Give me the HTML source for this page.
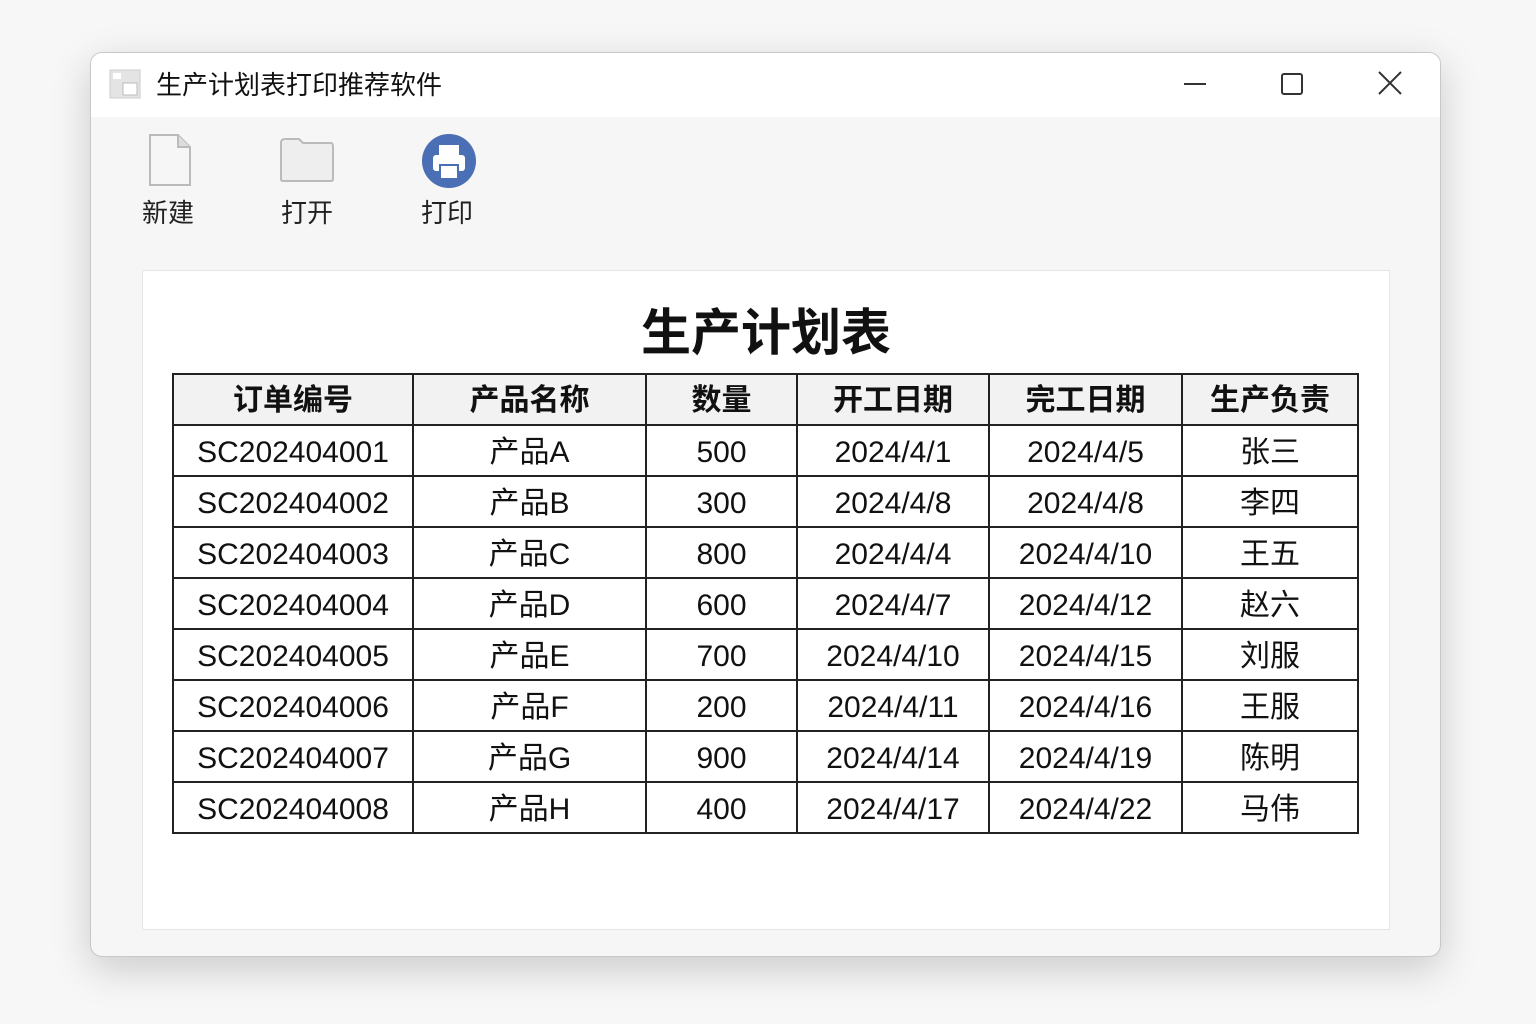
<!DOCTYPE html><html><head><meta charset="utf-8"><style>
body{margin:0;width:1536px;height:1024px;background:#f7f7f7;font-family:"Liberation Sans","Noto Sans CJK SC",sans-serif;position:relative;overflow:hidden}
.win{position:absolute;left:90px;top:52px;width:1349px;height:903px;border:1px solid #c8c8c8;border-radius:12px;background:#f6f6f6;box-shadow:0 12px 40px rgba(0,0,0,.18);overflow:hidden}
.title{position:absolute;left:0;top:0;width:100%;height:64px;background:#fff}
.title span{position:absolute;left:65px;top:12px;font-size:26px;color:#111}
.tb{position:absolute;font-size:26px;color:#222;top:140px}
.panel{position:absolute;left:51px;top:217px;width:1246px;height:658px;background:#fff;border:1px solid #e6e6e6}
h1{position:absolute;left:0;width:100%;top:22px;margin:0;text-align:center;font-size:50px;font-weight:bold;color:#111}
table{position:absolute;left:29px;top:102px;border-collapse:collapse;font-size:30px;color:#111}
td,th{border:2px solid #222;height:51px;padding:0;text-align:center;line-height:30px;padding-top:4px;box-sizing:border-box}
th{background:#f2f2f2;font-weight:bold;padding-top:2px}
</style></head><body>
<div class="win">
<div class="title">
<svg style="position:absolute;left:18px;top:16px" width="32" height="30"><rect x="1" y="1" width="30" height="28" fill="#e4e4e4" stroke="#ccc"/><rect x="4" y="4" width="8" height="6" fill="#fff"/><rect x="14" y="14" width="14" height="12" fill="#fff" stroke="#bbb"/></svg>
<span>生产计划表打印推荐软件</span>
<div style="position:absolute;left:1093px;top:30px;width:22px;height:2px;background:#333"></div>
<div style="position:absolute;left:1190px;top:20px;width:18px;height:18px;border:2px solid #333;border-radius:3px"></div>
<svg style="position:absolute;left:1287px;top:18px" width="24" height="24"><path d="M1 1L23 23M23 1L1 23" stroke="#333" stroke-width="2"/></svg>
</div>
<svg style="position:absolute;left:57px;top:80px" width="44" height="54"><path d="M2 2H30L42 14V52H2Z" fill="#f6f6f6" stroke="#bbb" stroke-width="2"/><path d="M30 2V14H42" fill="#ddd" stroke="#bbb" stroke-width="2"/></svg>
<svg style="position:absolute;left:188px;top:84px" width="56" height="46"><path d="M2 6Q2 2 6 2H20L24 6H52Q54 6 54 10V42Q54 44 52 44H4Q2 44 2 42Z" fill="#eee" stroke="#bbb" stroke-width="2"/></svg>
<svg style="position:absolute;left:330px;top:80px" width="56" height="56"><circle cx="28" cy="28" r="27" fill="#4a6fb5"/><rect x="18" y="12" width="20" height="10" fill="#fff"/><rect x="12" y="22" width="32" height="16" rx="3" fill="#fff"/><rect x="19" y="32" width="18" height="14" fill="#fff" stroke="#4a6fb5" stroke-width="2"/></svg>
<div class="tb" style="left:51px">新建</div>
<div class="tb" style="left:190px">打开</div>
<div class="tb" style="left:330px">打印</div>
<div class="panel">
<h1>生产计划表</h1>
<table>
<colgroup><col style="width:240px"><col style="width:233px"><col style="width:151px"><col style="width:192px"><col style="width:193px"><col style="width:176px"></colgroup>
<tr><th>订单编号</th><th>产品名称</th><th>数量</th><th>开工日期</th><th>完工日期</th><th>生产负责</th></tr>
<tr><td>SC202404001</td><td>产品A</td><td>500</td><td>2024/4/1</td><td>2024/4/5</td><td>张三</td></tr>
<tr><td>SC202404002</td><td>产品B</td><td>300</td><td>2024/4/8</td><td>2024/4/8</td><td>李四</td></tr>
<tr><td>SC202404003</td><td>产品C</td><td>800</td><td>2024/4/4</td><td>2024/4/10</td><td>王五</td></tr>
<tr><td>SC202404004</td><td>产品D</td><td>600</td><td>2024/4/7</td><td>2024/4/12</td><td>赵六</td></tr>
<tr><td>SC202404005</td><td>产品E</td><td>700</td><td>2024/4/10</td><td>2024/4/15</td><td>刘服</td></tr>
<tr><td>SC202404006</td><td>产品F</td><td>200</td><td>2024/4/11</td><td>2024/4/16</td><td>王服</td></tr>
<tr><td>SC202404007</td><td>产品G</td><td>900</td><td>2024/4/14</td><td>2024/4/19</td><td>陈明</td></tr>
<tr><td>SC202404008</td><td>产品H</td><td>400</td><td>2024/4/17</td><td>2024/4/22</td><td>马伟</td></tr>
</table>
</div>
</div>
</body></html>
